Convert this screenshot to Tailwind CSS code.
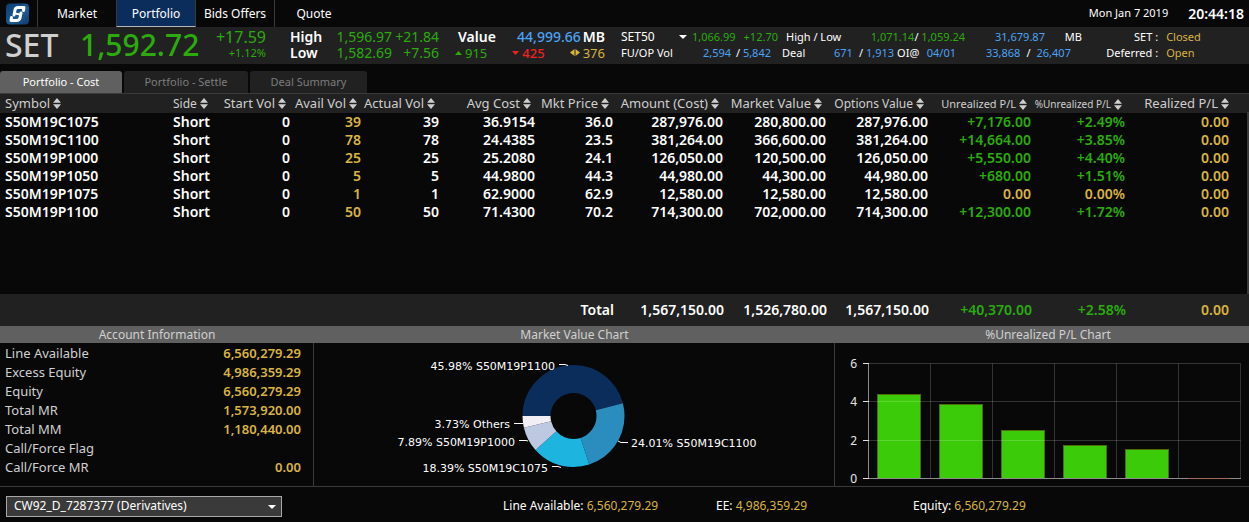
<!DOCTYPE html>
<html lang="en">

<head>
    <meta charset="UTF-8">
    <meta name="viewport" content="width=device-width, initial-scale=1.0">
    <title>Portfolio</title>
    <script src="https://cdn.jsdelivr.net/npm/@tailwindcss/browser@4"></script>
</head>

<body class="bg-[#080808] font-['Noto_Sans',sans-serif] text-white text-[11px]">
    <svg class="hidden">
        <symbol id="sort" viewBox="0 0 8 11">
            <path d="M4 0L8 4.7H0zM0 6.3h8L4 11z" fill="#cfcfcf" />
        </symbol>
    </svg>

    <div class="min-h-screen flex flex-col">
        <!-- Top navigation -->
        <header class="flex items-stretch h-[27px]">
            <a href="#" aria-label="Home" class="w-[38px] flex items-center pl-[6px] border-r border-[#3a3a3a]">
                <svg class="w-[23px] h-[22px]" viewBox="0 0 23 22">
                    <defs>
                        <linearGradient id="logo" x1="0" y1="0" x2="1" y2="1">
                            <stop offset="0" stop-color="#0c3c70" />
                            <stop offset=".6" stop-color="#1c5c96" />
                            <stop offset="1" stop-color="#0d3a68" />
                        </linearGradient>
                    </defs>
                    <rect width="23" height="21" y=".5" rx="4" fill="url(#logo)" />
                    <path d="M17.500 7.500L18 4.500H12Q9.500 4.500 9 7L8 12" fill="none" stroke="#fff" stroke-width="3" stroke-linecap="round" stroke-linejoin="round" />
                    <path d="M5.500 14.500L5 17.500H10.500Q13.500 17.500 14 15L15 10" fill="none" stroke="#fff" stroke-width="3" stroke-linecap="round" stroke-linejoin="round" />
                    <path d="M9 10.500L14 11.500" stroke="#fff" stroke-width="2" />
                </svg>
            </a>
            <nav class="flex text-[12px]">
                <a href="#" class="w-[78px] flex items-center justify-center">Market</a>
                <a href="#" class="w-[80px] flex items-center justify-center pt-px bg-[#0b2d5c] border-x border-x-[#3a3a3a] border-b border-b-[#b5b5b5]">Portfolio</a>
                <a href="#" class="w-[79px] flex items-center justify-center border-r border-[#3a3a3a]">Bids Offers</a>
                <a href="#" class="w-[78px] flex items-center justify-center">Quote</a>
            </nav>
            <div class="ml-auto flex items-center gap-5 pr-[5px]">
                <span>Mon Jan 7 2019</span>
                <span class="text-[14px] font-semibold">20:44:18</span>
            </div>
        </header>

        <!-- Market summary -->
        <section class="flex items-center h-[37px] pb-[2px] bg-[#212121] leading-4 whitespace-nowrap">
            <div class="w-[80px] pl-[5px] text-[32px] font-medium text-[#d0d0d0]">SET</div>
            <div class="w-[120px] text-[30px] font-medium text-[#2bac0c]">1,592.72</div>
            <div class="w-[66px] text-right text-[#2bac0c]">
                <div class="text-[16px]">+17.59</div>
                <div>+1.12%</div>
            </div>
            <div class="w-[173px] pl-[24px] grid grid-cols-[1fr_auto_47px] text-[14px] text-right text-[#2bac0c]">
                <b class="font-semibold text-white text-left">High</b><span>1,596.97</span><span>+21.84</span>
                <b class="font-semibold text-white text-left">Low</b><span>1,582.69</span><span>+7.56</span>
            </div>
            <div class="w-[166px] pl-[16px] text-[13px]">
                <div class="flex font-semibold pl-[3px] text-[14px]">
                    <span>Value</span>
                    <span class="ml-auto text-[#4ba3f5] font-medium">44,999.66</span>
                    <span class="ml-[2px]">MB</span>
                </div>
                <div class="flex justify-between">
                    <span class="flex items-center gap-[3px] text-[#2bac0c]">
                        <svg class="w-[7px] h-[4px]" viewBox="0 0 7 4"><path d="M0 4L3.500 0L7 4z" fill="currentColor" /></svg>915
                    </span>
                    <span class="flex items-center gap-[3px] font-medium text-[#f02222]">
                        <svg class="w-[7px] h-[4px]" viewBox="0 0 7 4"><path d="M0 0H7L3.500 4z" fill="currentColor" /></svg>425
                    </span>
                    <span class="flex items-center gap-[3px] text-[#d9b441]">
                        <svg class="w-[10px] h-[7px]" viewBox="0 0 10 7"><path d="M4.500 0V7L0 3.500zM5.500 0V7L10 3.500z" fill="currentColor" /></svg>376
                    </span>
                </div>
            </div>
            <div class="w-[173px] pl-[16px]">
                <div class="flex items-center text-[#2bac0c]">
                    <button type="button" class="flex items-center justify-between w-[66px] mr-[5px] text-[12px] text-white">SET50
                        <svg class="w-[8px] h-[4px]" viewBox="0 0 8 4"><path d="M0 0H8L4 4z" fill="#fff" /></svg>
                    </button>
                    <span>1,066.99</span><span class="ml-auto">+12.70</span>
                </div>
                <div class="flex text-[#4ba3f5]">
                    <span class="w-[82px] text-white">FU/OP Vol</span>
                    <span>2,594</span><span class="ml-auto mr-[7px]"><i class="not-italic text-white">/</i> 5,842</span>
                </div>
            </div>
            <div class="w-[187px] pl-[8px]">
                <div class="flex text-[#2bac0c]">
                    <span class="text-white">High / Low</span>
                    <span class="ml-auto">1,071.14<i class="not-italic text-white">/</i> 1,059.24</span>
                </div>
                <div class="flex -ml-[4px] text-[#4ba3f5]">
                    <span class="w-[52px] text-white">Deal</span>
                    <span class="w-[25px]">671</span>
                    <span><i class="not-italic text-white">/</i> 1,913</span>
                    <span class="ml-[3px] text-white">OI@</span>
                    <span class="ml-auto mr-[9px]">04/01</span>
                </div>
            </div>
            <div class="w-[117px] pl-[21px] text-[#4ba3f5]">
                <div class="flex justify-between pl-[9px]"><span>31,679.87</span><span class="text-white">MB</span></div>
                <div class="flex gap-[6px]">33,868 <i class="not-italic text-white">/</i> 26,407</div>
            </div>
            <div class="ml-auto mr-[31px] grid grid-cols-2 gap-x-[8px] text-[#d9b441]">
                <span class="text-right text-white">SET :</span><span>Closed</span>
                <span class="text-right text-white">Deferred :</span><span>Open</span>
            </div>
        </section>

        <!-- Portfolio tabs -->
        <div role="tablist" class="flex gap-[2px] mt-[7px] h-[22px] text-[11px]">
            <button type="button" role="tab" aria-selected="true" class="w-[122px] rounded-t-[3px] bg-[#606060]">Portfolio - Cost</button>
            <button type="button" role="tab" class="w-[124px] rounded-t-[3px] bg-[#212121] text-[#7d7d7d]">Portfolio - Settle</button>
            <button type="button" role="tab" class="w-[117px] rounded-t-[3px] bg-[#212121] text-[#7d7d7d]">Deal Summary</button>
        </div>

        <!-- Positions -->
        <div class="flex-1 flex flex-col">
            <div class="relative flex-1">
                <table class="w-full table-fixed text-[14px] text-right font-semibold leading-[18px] whitespace-nowrap">
                    <colgroup>
                        <col class="w-[173px]">
                        <col class="w-[42px]">
                        <col class="w-[75px]">
                        <col class="w-[71px]">
                        <col class="w-[78px]">
                        <col class="w-[96px]">
                        <col class="w-[78px]">
                        <col class="w-[110px]">
                        <col class="w-[103px]">
                        <col class="w-[102px]">
                        <col class="w-[103px]">
                        <col class="w-[94px]">
                        <col>
                    </colgroup>
                    <thead id="heads" class="bg-[#212121] border-t border-[#3a3a3a] text-[#cfcfcf] text-[13px]"></thead>
                    <tbody id="rows"></tbody>
                </table>
                <!-- scroll track -->
                <div class="absolute right-0 top-[19px] bottom-0 w-[2px] bg-[#3a3a3a]"></div>
            </div>
            <table class="w-full table-fixed h-[32px] bg-[#212121] text-[14px] text-right font-semibold whitespace-nowrap">
                <tbody>
                    <tr>
                        <th scope="row" class="w-[614px] pb-[2px] font-semibold">Total</th>
                        <td class="w-[110px] pb-[2px]">1,567,150.00</td>
                        <td class="w-[103px] pb-[2px]">1,526,780.00</td>
                        <td class="w-[102px] pb-[2px]">1,567,150.00</td>
                        <td class="w-[103px] pb-[2px] text-[#2bac0c]">+40,370.00</td>
                        <td class="w-[94px] pb-[2px] text-[#2bac0c]">+2.58%</td>
                        <td class="pr-[20px] pb-[2px] text-[#d9b441]">0.00</td>
                    </tr>
                </tbody>
            </table>
        </div>

        <!-- Panels -->
        <div class="grid grid-cols-[314fr_521fr_414fr] border-b border-[#3a3a3a]">
            <section class="flex flex-col">
                <h2 class="h-[17px] leading-[17px] bg-[#606060] text-center text-[12px] text-[#d0d0d0]">Account Information</h2>
                <dl id="account" class="flex-1 pl-[5px] pr-[12px] pt-px border-r border-[#3a3a3a] text-[13px] leading-[19px] text-[#d0d0d0]"></dl>
            </section>
            <section>
                <h2 class="h-[17px] leading-[17px] bg-[#606060] text-center text-[12px] text-[#d0d0d0]">Market Value Chart</h2>
                <div class="border-r border-[#3a3a3a]">
                    <svg class="block w-full" viewBox="314 343 520 143" role="img" aria-label="Market value by symbol">
                        <g id="donut" fill="none" stroke-width="28" transform="rotate(180 573.5 416)"></g>
                        <path d="M559 364.500H565L568 365.500M514 423.500H523M519 440.500H526L528 441M552 466.500H558L561 467.500M618 441L621 442.500H628" fill="none" stroke="#fff" />
                        <g class="font-['DejaVu_Sans',sans-serif] text-[11px]" fill="#fff">
                            <text x="555" y="370" text-anchor="end">45.98% S50M19P1100</text>
                            <text x="510" y="428" text-anchor="end">3.73% Others</text>
                            <text x="515" y="446" text-anchor="end">7.89% S50M19P1000</text>
                            <text x="548" y="472" text-anchor="end">18.39% S50M19C1075</text>
                            <text x="631" y="447">24.01% S50M19C1100</text>
                        </g>
                    </svg>
                </div>
            </section>
            <section>
                <h2 class="h-[17px] pl-3 leading-[17px] bg-[#606060] text-center text-[12px] text-[#d0d0d0]">%Unrealized P/L Chart</h2>
                <svg class="block w-full" viewBox="835 343 414 143" role="img" aria-label="Unrealized profit and loss in percent">
                    <g id="bars" fill="#3bcb08" stroke="#4e6b06"></g>
                    <path d="M868.500 363.500H1240.500V478.500M868.500 401.500H1240.500M868.500 440.500H1240.500M930.500 363.500V478.500M992.500 363.500V478.500M1054.500 363.500V478.500M1116.500 363.500V478.500M1178.500 363.500V478.500" fill="none" stroke="#fff" stroke-opacity=".18" />
                    <path d="M868.500 363V478.500H1241" fill="none" stroke="#8c8c8c" />
                    <path d="M1188 478.500H1230" stroke="#a06a5c" />
                    <path d="M863 363.500H869M863 401.500H869M863 440.500H869M863 478.500H869" stroke="#e0e0e0" />
                    <g class="text-[12px]" fill="#e6e6e6" text-anchor="end">
                        <text x="857" y="368">6</text>
                        <text x="857" y="406">4</text>
                        <text x="857" y="445">2</text>
                        <text x="857" y="483">0</text>
                    </g>
                </svg>
            </section>
        </div>

        <!-- Account bar -->
        <footer class="flex items-center h-[35px] pt-[3px] text-[12px] whitespace-nowrap">
            <div class="relative w-[276px] ml-[6px] mr-[221px]">
                <select aria-label="Account" class="appearance-none block w-full h-[21px] pl-[7px] bg-[#3a3a3a] border border-[#a8a8a8] text-[12px] text-white">
                    <option>CW92_D_7287377 (Derivatives)</option>
                </select>
                <svg class="absolute right-[6px] top-[9px] w-[8px] h-[4px] pointer-events-none" viewBox="0 0 8 4"><path d="M0 0H8L4 4z" fill="#fff" /></svg>
            </div>
            <div class="w-[213px]">Line Available: <span class="text-[#d9b441]">6,560,279.29</span></div>
            <div class="w-[197px]">EE: <span class="text-[#d9b441]">4,986,359.29</span></div>
            <div>Equity: <span class="text-[#d9b441]">6,560,279.29</span></div>
        </footer>
    </div>

    <script>
        const heads = [
            ["Symbol", "text-left pl-[5px]"],
            ["Side", "text-left text-[12px]"],
            ["Start Vol", "pr-[4px]"],
            ["Avail Vol", "pr-[4px]"],
            ["Actual Vol", "pr-[4px]"],
            ["Avg Cost", "pr-[4px]"],
            ["Mkt Price", "pr-[4px]"],
            ["Amount (Cost)", "pr-[4px]"],
            ["Market Value", "pr-[4px]"],
            ["Options Value", "pr-[4px] text-[12px]"],
            ["Unrealized P/L", "pr-[4px] text-[11px]"],
            ["%Unrealized P/L", "pr-[3px] text-[10px]"],
            ["Realized P/L", "pr-[20px]"]
        ];
        const rows = [
            ["S50M19C1075", "Short", "0", "39", "39", "36.9154", "36.0", "287,976.00", "280,800.00", "287,976.00", "+7,176.00", "+2.49%", "0.00"],
            ["S50M19C1100", "Short", "0", "78", "78", "24.4385", "23.5", "381,264.00", "366,600.00", "381,264.00", "+14,664.00", "+3.85%", "0.00"],
            ["S50M19P1000", "Short", "0", "25", "25", "25.2080", "24.1", "126,050.00", "120,500.00", "126,050.00", "+5,550.00", "+4.40%", "0.00"],
            ["S50M19P1050", "Short", "0", "5", "5", "44.9800", "44.3", "44,980.00", "44,300.00", "44,980.00", "+680.00", "+1.51%", "0.00"],
            ["S50M19P1075", "Short", "0", "1", "1", "62.9000", "62.9", "12,580.00", "12,580.00", "12,580.00", "0.00", "0.00%", "0.00"],
            ["S50M19P1100", "Short", "0", "50", "50", "71.4300", "70.2", "714,300.00", "702,000.00", "714,300.00", "+12,300.00", "+1.72%", "0.00"]
        ];
        const account = [
            ["Line Available", "6,560,279.29"],
            ["Excess Equity", "4,986,359.29"],
            ["Equity", "6,560,279.29"],
            ["Total MR", "1,573,920.00"],
            ["Total MM", "1,180,440.00"],
            ["Call/Force Flag", ""],
            ["Call/Force MR", "0.00"]
        ];

        document.querySelector("#heads").innerHTML = "<tr>" + heads.map(([text, cls]) =>
            `<th scope="col" class="font-normal align-baseline ${cls}">${text}<svg class="inline-block align-middle w-[8px] h-[11px] ml-[3px] -mt-[2px]"><use href="#sort" /></svg></th>`
        ).join("") + "</tr>";

        // Column classes: gold for available volume and flat values, green for gains
        function cellClass(value, i) {
            if (i === 0) return "text-left pl-[5px]";
            if (i === 1) return "text-left";
            if (i === 3) return "text-[#d9b441]";
            if (i === 12) return "text-[#d9b441] pr-[20px]";
            if (i > 9) return value[0] === "+" ? "text-[#2bac0c]" : "text-[#d9b441]";
            return "";
        }
        document.querySelector("#rows").innerHTML = rows.map(row =>
            "<tr>" + row.map((v, i) => `<td class="${cellClass(v, i)}">${v}</td>`).join("") + "</tr>"
        ).join("");

        document.querySelector("#account").innerHTML = account.map(([k, v]) =>
            `<div class="flex justify-between"><dt>${k}</dt><dd class="font-semibold text-[#d9b441]">${v}</dd></div>`
        ).join("");

        // Donut slices, clockwise from the left
        let start = 0;
        const slices = [[45.98, "#0b2d5c"], [24.01, "#2b8cbe"], [18.39, "#1eb4e0"], [7.89, "#bdc9e1"], [3.73, "#f1eef6"]];
        document.querySelector("#donut").innerHTML = slices.map(([size, color]) => {
            const slice = `<circle cx="573.5" cy="416" r="37" stroke="${color}" pathLength="100" stroke-dasharray="${size} ${100 - size}" stroke-dashoffset="${-start}" />`;
            start += size;
            return slice;
        }).join("");

        document.querySelector("#bars").innerHTML = [4.4, 3.85, 2.49, 1.72, 1.51].map((v, i) => {
            const h = Math.round(v * 115 / 6);
            return `<rect x="${877.5 + i * 62}" y="${478.5 - h}" width="43" height="${h}" />`;
        }).join("");
    </script>
</body>

</html>
